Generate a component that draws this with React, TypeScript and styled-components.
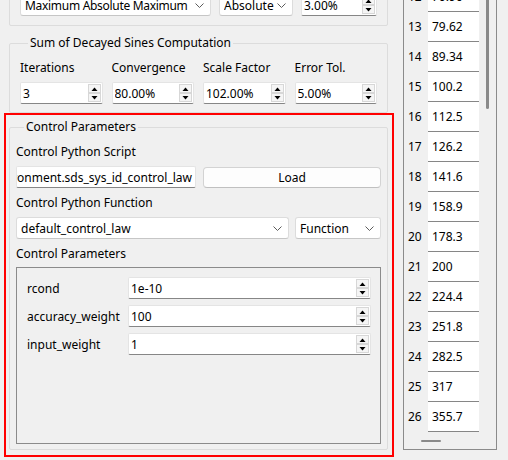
import React from 'react';
import styled, { createGlobalStyle } from 'styled-components';

const GlobalStyle = createGlobalStyle`
    html, body {
        margin: 0;
        padding: 0;
        background: #f0f0f0;
    }

    body {
        font-family: "Noto Sans", "DejaVu Sans", sans-serif;
        font-size: 12px;
        color: #000;
    }
`;

const Window = styled.div`
    width: 508px;
    height: 460px;
    overflow: hidden;
    display: grid;
    grid-template-columns: 397px 111px;
    background: #f0f0f0;
`;

const LeftPane = styled.div`
    display: flex;
    flex-direction: column;
    min-width: 0;
`;

const GroupBox = styled.fieldset`
    margin: 0 9px;
    min-width: 0;
    border: 1px solid #dcdcdc;
    border-radius: 2px;
    padding: 9px 10px 8px 10px;
`;

const TopGroup = styled(GroupBox)`
    margin-top: -20px;
    padding-top: 13px;
    padding-bottom: 9px;
`;

const SinesGroup = styled(GroupBox)`
    margin-top: 9px;
`;

const ControlGroup = styled(GroupBox)`
    margin: 0;
    padding: 9px 6px 5px 6px;
`;

const Legend = styled.legend`
    margin-left: 8px;
    padding: 0 2px;
    line-height: 16px;
`;

const Highlight = styled.div`
    margin: 0 3px 0 4px;
    border: 2px solid #ff0000;
    padding: 4px 4px 5px 3px;
`;

const Columns = styled.div<{ $template: string; $gap: number }>`
    display: grid;
    grid-template-columns: ${({ $template }) => $template};
    column-gap: ${({ $gap }) => $gap}px;
    align-items: center;
`;

const FieldLabel = styled.div<{ $above?: number; $below?: number }>`
    line-height: 16px;
    height: 16px;
    margin-top: ${({ $above }) => $above ?? 0}px;
    margin-bottom: ${({ $below }) => $below ?? 6}px;
    white-space: nowrap;
`;

const Stack = styled.div`
    display: flex;
    flex-direction: column;
`;

const ComboBox = styled.div`
    height: 22px;
    box-sizing: border-box;
    display: flex;
    align-items: center;
    gap: 2px;
    background: #fff;
    border: 1px solid #dcdcdc;
    border-bottom-color: #c6c6c6;
    border-radius: 3px;
    padding: 0 6px 0 4px;
    white-space: nowrap;
    overflow: hidden;
`;

const ComboText = styled.span<{ $tight?: boolean }>`
    flex: 1;
    min-width: 0;
    overflow: hidden;
    letter-spacing: ${({ $tight }) => ($tight ? '-0.3px' : 'normal')};
`;

const SpinBox = styled.div`
    height: 22px;
    box-sizing: border-box;
    display: flex;
    align-items: center;
    background: #fff;
    border: 1px solid #e4e4e4;
    border-bottom-color: #868686;
    border-radius: 2px;
    padding: 0 1px 0 2px;
    min-width: 0;
`;

const SpinValue = styled.span`
    flex: 1;
    white-space: nowrap;
    overflow: hidden;
`;

const SpinButtons = styled.div`
    display: flex;
    flex-direction: column;
    align-self: flex-start;
    margin-top: 1px;
`;

const SpinButton = styled.div`
    width: 13px;
    height: 9px;
    box-sizing: border-box;
    border: 1px solid #d7d7d7;
    background: #f5f5f5;
    display: flex;
    align-items: center;
    justify-content: center;
`;

const LineEdit = styled.div`
    height: 22px;
    box-sizing: border-box;
    display: flex;
    align-items: center;
    justify-content: flex-end;
    background: #fff;
    border: 1px solid #e4e4e4;
    border-bottom-color: #868686;
    border-radius: 2px;
    padding: 0 3px 0 0;
    overflow: hidden;
    white-space: nowrap;
`;

const PushButton = styled.button`
    height: 21px;
    box-sizing: border-box;
    font: inherit;
    color: #000;
    background: #fdfdfd;
    border: 1px solid #d3d3d3;
    border-bottom-color: #c0c0c0;
    border-radius: 4px;
    padding: 0;
`;

const ParamFrame = styled.div`
    height: 177px;
    box-sizing: border-box;
    border: 1px solid #8b8b8b;
    padding: 9px 9px 0 10px;
    display: grid;
    grid-template-columns: 101px 1fr;
    grid-auto-rows: 22px;
    row-gap: 6px;
    align-content: start;
    align-items: center;
`;

const ParamName = styled.div`
    white-space: nowrap;
`;

const RightPane = styled.div`
    display: flex;
    flex-direction: column;
    padding: 0 11px 19px 6px;
`;

const TableBox = styled.div`
    flex: 1;
    margin-top: -10px;
    border: 1px solid #8b8b8b;
    display: grid;
    grid-template-columns: 75px 1fr;
    grid-template-rows: 1fr 17px;
    overflow: hidden;
`;

const Viewport = styled.div`
    overflow: hidden;
`;

const Rows = styled.div`
    margin-top: -9px;
`;

const Row = styled.div`
    display: grid;
    grid-template-columns: 24px 51px;
    height: 30px;
`;

const RowNumber = styled.div`
    padding-left: 4px;
    line-height: 30px;
`;

const Cell = styled.div`
    background: #fff;
    border-bottom: 1px solid #868686;
    padding-left: 4px;
    line-height: 29px;
    white-space: nowrap;
`;

const VScroll = styled.div`
    padding-left: 7px;
`;

const VThumb = styled.div`
    width: 3px;
    height: 118px;
    border-radius: 2px;
    background: #8a8a8a;
`;

const HScroll = styled.div`
    padding: 8px 0 0 17px;
`;

const HThumb = styled.div`
    width: 20px;
    height: 2px;
    border-radius: 1px;
    background: #8a8a8a;
`;

const Chevron = () => (
    <svg width="9" height="5" viewBox="0 0 9 5">
        <path d="M0.5 0.5 L4.5 4.5 L8.5 0.5" fill="none" stroke="#5c5c5c" strokeWidth="1" />
    </svg>
);

const Arrow = ({ up }: { up?: boolean }) => (
    <svg width="7" height="4" viewBox="0 0 7 4">
        <path d={up ? 'M0.5 4 L3.5 0.5 L6.5 4 Z' : 'M0.5 0 L3.5 3.5 L6.5 0 Z'} fill="#000" />
    </svg>
);

const Combo = ({ text, tight }: { text: string; tight?: boolean }) => (
    <ComboBox>
        <ComboText $tight={tight}>{text}</ComboText>
        <Chevron />
    </ComboBox>
);

const Spin = ({ value }: { value: string }) => (
    <SpinBox>
        <SpinValue>{value}</SpinValue>
        <SpinButtons>
            <SpinButton><Arrow up /></SpinButton>
            <SpinButton><Arrow /></SpinButton>
        </SpinButtons>
    </SpinBox>
);

const sines = [
    { label: 'Iterations', value: '3' },
    { label: 'Convergence', value: '80.00%' },
    { label: 'Scale Factor', value: '102.00%' },
    { label: 'Error Tol.', value: '5.00%' },
];

const params = [
    { name: 'rcond', value: '1e-10' },
    { name: 'accuracy_weight', value: '100' },
    { name: 'input_weight', value: '1' },
];

const tableValues = [
    '70.96', '79.62', '89.34', '100.2', '112.5', '126.2', '141.6', '158.9',
    '178.3', '200', '224.4', '251.8', '282.5', '317', '355.7',
];

export default function App() {
    return (
        <>
            <GlobalStyle />
            <Window>
                <LeftPane>
                    <TopGroup>
                        <Columns $template="191px 74px 1fr" $gap={8}>
                            <Combo text="Maximum Absolute Maximum" tight />
                            <Combo text="Absolute" />
                            <Spin value="3.00%" />
                        </Columns>
                    </TopGroup>

                    <SinesGroup>
                        <Legend>Sum of Decayed Sines Computation</Legend>
                        <Columns $template="repeat(4, 1fr)" $gap={9}>
                            {sines.map((s) => (
                                <Stack key={s.label}>
                                    <FieldLabel>{s.label}</FieldLabel>
                                    <Spin value={s.value} />
                                </Stack>
                            ))}
                        </Columns>
                    </SinesGroup>

                    <Highlight>
                        <ControlGroup>
                            <Legend>Control Parameters</Legend>
                            <FieldLabel>Control Python Script</FieldLabel>
                            <Columns $template="180px 1fr" $gap={7}>
                                <LineEdit>sds.environment.sds_sys_id_control_law</LineEdit>
                                <PushButton>Load</PushButton>
                            </Columns>
                            <FieldLabel $above={7}>Control Python Function</FieldLabel>
                            <Columns $template="1fr 86px" $gap={6}>
                                <Combo text="default_control_law" />
                                <Combo text="Function" />
                            </Columns>
                            <FieldLabel $above={7} $below={5}>Control Parameters</FieldLabel>
                            <ParamFrame>
                                {params.map((p) => (
                                    <React.Fragment key={p.name}>
                                        <ParamName>{p.name}</ParamName>
                                        <Spin value={p.value} />
                                    </React.Fragment>
                                ))}
                            </ParamFrame>
                        </ControlGroup>
                    </Highlight>
                </LeftPane>

                <RightPane>
                    <TableBox>
                        <Viewport>
                            <Rows>
                                {tableValues.map((v, i) => (
                                    <Row key={v}>
                                        <RowNumber>{i + 12}</RowNumber>
                                        <Cell>{v}</Cell>
                                    </Row>
                                ))}
                            </Rows>
                        </Viewport>
                        <VScroll>
                            <VThumb />
                        </VScroll>
                        <HScroll>
                            <HThumb />
                        </HScroll>
                    </TableBox>
                </RightPane>
            </Window>
        </>
    );
}
